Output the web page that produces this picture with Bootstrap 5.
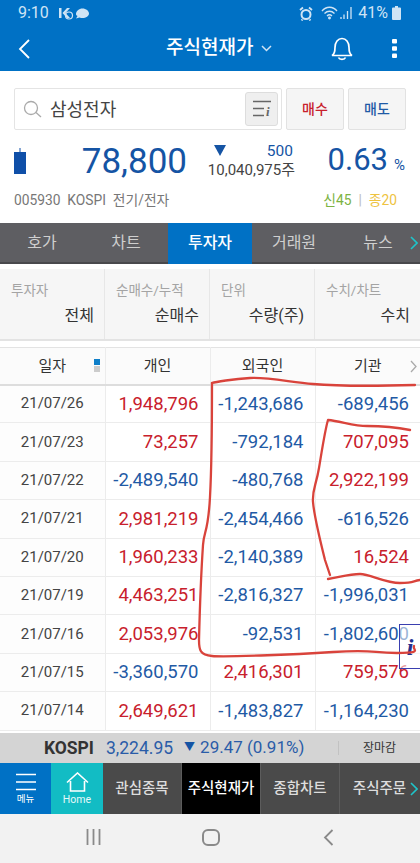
<!DOCTYPE html>
<html lang="ko">
<head>
<meta charset="UTF-8" />
<meta name="viewport" content="width=device-width, initial-scale=1.0"/>
<title>주식현재가</title>
<link href="https://cdn.jsdelivr.net/npm/bootstrap@5.3.2/dist/css/bootstrap.min.css" rel="stylesheet"/>
<style>
html, body { height: 863px; overflow: hidden; }
body { width: 420px; position: relative; background: #fff; color: #333; font-family: Roboto, "Noto Sans CJK KR", sans-serif; }
.app-top { background: #0071c5; height: 71px; color: #fff; padding: 0 23px 0 18px; }
.status-row { height: 26px; font-size: 16px; color: #cfe4f5; margin-right: -4px; }
.title-row { height: 45px; }
.title-text { font-size: 19px; font-weight: 500; margin-left: 135px; }
.search-row { height: 69px; padding: 17px 14px 0 14px; gap: 4px; }
.search-box { width: 268px; height: 42px; border: 1px solid #e4e4e4; border-radius: 2px; padding: 0 3px 0 8px; }
.search-name { font-size: 18px; margin-left: 8px; color: #444; }
.info-btn { width: 33px; height: 34px; background: #efefef; border: 1px solid #ddd; border-radius: 3px; }
.side-btn { width: 58px; height: 42px; background: #f5f5f5; border: 1px solid #e2e2e2; border-radius: 2px; font-size: 14px; font-weight: 500; }
.is-up { color: #c8202c; }
.is-down { color: #1f5aa5; }
.price-row { height: 44px; padding: 0 15px 0 14px; }
.big-price { width: 161px; text-align: right; font-size: 35px; color: #1554a4; line-height: 44px; }
.change-box { width: 88px; margin-left: 20px; margin-top: -2px; text-align: right; line-height: 19px; font-size: 15.500px; }
.change-top { color: #1554a4; padding-right: 2px; }
.change-vol { color: #444; font-size: 15px; white-space: nowrap; }
.pct-box { margin-left: auto; color: #1554a4; font-size: 31px; line-height: 44px; white-space: nowrap; }
.pct-box span { font-size: 15px; margin-left: 6px; }
.code-row { height: 39px; padding: 6px 23px 0 14px; font-size: 13.800px; color: #777; }
.tag-new { color: #7cb342; }
.tag-sep { color: #bbb; margin: 0 7px; }
.tag-mid { color: #eec33f; }
.tab-strip { height: 41px; background: #5e5e62; border-bottom: 2px solid #49494c; position: relative; }
.tab-item { width: 84px; text-align: center; line-height: 40px; color: #cfcfcf; font-size: 16px; }
.tab-item.is-on { background: #0071c5; color: #fff; font-weight: 500; height: 41px; }
.tab-more { position: absolute; right: 2px; top: 13px; }
.filter-strip { margin-top: 5px; height: 72px; background: #f6f6f6; border-bottom: 2px solid #e3e3e3; }
.filter-cell { width: 105px; border-right: 1px solid #e7e7e7; padding: 11px 10px 0 11px; }
.filter-cell:last-child { border-right: 0; }
.filter-label { font-size: 13.500px; color: #a4a4a4; line-height: 20px; }
.filter-value { font-size: 16px; color: #333; text-align: right; line-height: 24px; margin-top: 4px; }
.data-wrap { margin-top: 6px; }
.quote-table { table-layout: fixed; width: 420px; border-collapse: collapse; margin: 0; }
.quote-table th, .quote-table td { border-right: 1px solid #ececec; border-bottom: 1px solid #ececec; padding: 0 11px 0 0; text-align: right; vertical-align: middle; box-shadow: none; background: none; }
.quote-table th:last-child, .quote-table td:last-child { border-right: 0; }
.quote-table thead th { height: 37px; background: #fbfbfb; border-top: 1px solid #e3e3e3; border-bottom: 2px solid #ddd; font-size: 15px; font-weight: 400; color: #333; text-align: center; padding: 0; position: relative; }
.quote-table td { height: 38.400px; font-size: 18.500px; line-height: 1; }
.quote-table td:first-child { text-align: center; font-size: 15px; color: #444; padding: 0; background: #fdfdfd; }
.sort-mark { position: absolute; right: 5px; top: 11px; width: 6px; }
.sort-mark i { display: block; height: 6px; background: #0f7fc9; margin-bottom: 1px; }
.sort-mark i + i { background: #ccc; }
.head-more { position: absolute; right: 3px; top: 12px; }
.market-bar { position: absolute; left: 0; top: 733px; width: 420px; height: 30px; background: #d4d4d4; font-size: 17px; }
.market-name { width: 94px; text-align: right; font-weight: 700; color: #333; font-size: 17.500px; }
.market-num { color: #2a5ca8; margin-left: 12px; white-space: nowrap; font-size: 17.500px; }
.market-change { color: #2a5ca8; margin-left: 11px; white-space: nowrap; }
.market-tri { font-size: 11px; margin-right: 5px; vertical-align: 2px; color: #1554a4; }
.market-state { margin-left: auto; width: 82px; font-size: 12px; color: #333; text-align: center; border-left: 1px solid #c2c2c2; line-height: 14px; }
.app-nav { position: absolute; left: 0; top: 763px; width: 420px; height: 51px; background: #4a4a4a; color: #ddd; }
.nav-menu { width: 51px; background: #0071c5; color: #fff; }
.nav-home { width: 52px; background: #12bcc4; color: #fff; }
.nav-mini { font-size: 9.500px; line-height: 11px; margin-top: 2px; }
.nav-home .nav-mini { font-size: 10.500px; color: #e6f8f9; }
.nav-item { width: 79px; text-align: center; font-size: 14.500px; font-weight: 500; line-height: 51px; border-right: 1px solid #5c5c5c; white-space: nowrap; }
.nav-item.is-on { background: #000; color: #fff; }
.nav-arrow { position: absolute; right: 2px; top: 19px; }
.sys-nav { position: absolute; left: 0; top: 814px; width: 420px; height: 49px; background: #f2f2f2; }
.ink-layer { position: absolute; left: 0; top: 0; pointer-events: none; }
.float-tab { position: absolute; left: 399px; top: 624px; width: 21px; height: 45px; border: 1px solid #3a3fb0; border-right: 0; background: rgba(255,255,255,.55); color: #23308f; font-family: "Liberation Serif", serif; font-weight: 700; font-style: italic; font-size: 24px; text-align: center; line-height: 44px; }
</style>
</head>
<body>

<div class="app-top">
  <div class="status-row d-flex align-items-center">
    <span>9:10</span>
    <svg style="margin-left:9px" width="32" height="14" viewBox="0 0 32 14"><path d="M1 2h2.500v10H1zM4.500 7 9 2h3L7.500 7 12 12H9z" fill="#cfe4f5"/><circle cx="11" cy="9.500" r="3.500" fill="none" stroke="#cfe4f5" stroke-width="1.200"/><path d="M18 8c0-3 3-5.500 6.500-5.500S31 5 31 7.500 28 12 24.500 12c-1 0-2 0-3-.5L18 12.500l1.500-2.500c-1-.5-1.500-1-1.500-2z" fill="#cfe4f5"/></svg>
    <span class="ms-auto d-flex align-items-center">
      <svg width="14" height="15" viewBox="0 0 14 15" fill="none" stroke="#cfe4f5"><circle cx="7" cy="8.500" r="4.500" stroke-width="2"/><path d="M1 4 4 1.500M13 4l-3-2.500M3.500 13.500l-1 1M10.500 13.500l1 1" stroke-width="1.800"/></svg>
      <svg class="ms-2" width="32" height="14" viewBox="0 0 32 14" fill="none" stroke="#cfe4f5" stroke-width="1.300"><path d="M1 5c4-5 11-5 15 0M3.500 7.500c3-3 7-3 10 0M6 10c1.500-1.500 3.500-1.500 5 0"/><circle cx="8.500" cy="12" r=".8" fill="#cfe4f5"/><path d="M20 13v-2M23 13V8.500M26.500 13V5M30 13V1"/></svg>
      <span style="margin-left:5px">41%</span>
      <svg style="margin-left:4px" width="9" height="14" viewBox="0 0 9 14" fill="#cfe4f5"><path d="M3 0h3v1.500h2a1 1 0 0 1 1 1V13a1 1 0 0 1-1 1H1a1 1 0 0 1-1-1V2.500a1 1 0 0 1 1-1h2z"/></svg>
    </span>
  </div>
  <div class="title-row d-flex align-items-center">
    <svg width="13" height="20" viewBox="0 0 13 20" fill="none" stroke="#fff" stroke-width="1.800"><path d="M11 1 2 10l9 9"/></svg>
    <div class="d-flex align-items-center title-text">주식현재가
      <svg class="ms-2" width="11" height="7" viewBox="0 0 11 7" fill="none" stroke="#cfe4f5" stroke-width="1.500"><path d="m1 1 4.500 4.500L10 1"/></svg>
    </div>
    <svg class="ms-auto" width="22" height="24" viewBox="0 0 22 24" fill="none" stroke="#fff" stroke-width="1.700"><path d="M1 18.500c2-1 3-3 3-8C4 5 7 1.500 11 1.500s7 3.500 7 9c0 5 1 7 3 8z"/><path d="M7.500 20.500c1 2.500 6 2.500 7 0"/></svg>
    <svg style="margin-left:39px" width="5" height="19" viewBox="0 0 5 19" fill="#fff"><rect width="5" height="4.500" rx="1"/><rect y="7.200" width="5" height="4.500" rx="1"/><rect y="14.500" width="5" height="4.500" rx="1"/></svg>
  </div>
</div>

<div class="search-row d-flex">
  <div class="search-box d-flex align-items-center">
    <svg width="19" height="18" viewBox="0 0 19 18" fill="none" stroke="#aaa" stroke-width="1.300"><circle cx="8" cy="8" r="6.500"/><path d="m13 12.500 5 4.500"/></svg>
    <span class="search-name">삼성전자</span>
    <span class="info-btn ms-auto d-flex align-items-center justify-content-center">
      <svg width="20" height="18" viewBox="0 0 20 18"><path d="M1 1.500h18M1 8.500h11M1 15.500h11" stroke="#666" stroke-width="1.300"/><text x="14" y="16" font-family="Liberation Serif, serif" font-style="italic" font-weight="700" font-size="13" fill="#666">i</text></svg>
    </span>
  </div>
  <button class="side-btn is-up p-0">매수</button>
  <button class="side-btn is-down p-0">매도</button>
</div>

<div class="price-row d-flex align-items-center">
  <svg width="12" height="28" viewBox="0 0 12 28"><path d="M6 0v4" stroke="#0f4fa8"/><rect y="4" width="12" height="22" fill="#0f4fa8"/></svg>
  <div class="big-price">78,800</div>
  <div class="change-box position-relative">
    <svg class="position-absolute" style="left:7px;top:3px" width="12" height="11" viewBox="0 0 12 11" fill="#1554a4"><path d="M0 0h12L6 11z"/></svg>
    <div class="change-top">500</div>
    <div class="change-vol">10,040,975주</div>
  </div>
  <div class="pct-box">0.63<span>%</span></div>
</div>

<div class="code-row d-flex justify-content-between">
  <span>005930&nbsp; KOSPI&nbsp; 전기/전자</span>
  <span><span class="tag-new">신45</span><span class="tag-sep">|</span><span class="tag-mid">종20</span></span>
</div>

<div class="tab-strip d-flex">
  <div class="tab-item">호가</div>
  <div class="tab-item">차트</div>
  <div class="tab-item is-on">투자자</div>
  <div class="tab-item">거래원</div>
  <div class="tab-item">뉴스</div>
  <svg class="tab-more" width="8" height="14" viewBox="0 0 8 14" fill="none" stroke="#1fc4c9" stroke-width="1.600"><path d="m1 1 6 6-6 6"/></svg>
</div>

<div class="filter-strip d-flex">
  <div class="filter-cell"><div class="filter-label">투자자</div><div class="filter-value">전체</div></div>
  <div class="filter-cell"><div class="filter-label">순매수/누적</div><div class="filter-value">순매수</div></div>
  <div class="filter-cell"><div class="filter-label">단위</div><div class="filter-value">수량(주)</div></div>
  <div class="filter-cell"><div class="filter-label">수치/차트</div><div class="filter-value">수치</div></div>
</div>

<div class="data-wrap">
  <table class="table quote-table">
    <thead>
      <tr>
        <th>일자<span class="sort-mark"><i></i><i></i></span></th>
        <th>개인</th>
        <th>외국인</th>
        <th>기관<svg class="head-more" width="7" height="13" viewBox="0 0 7 13" fill="none" stroke="#aaa" stroke-width="1.300"><path d="m1 1 5 5.500L1 12"/></svg></th>
      </tr>
    </thead>
    <tbody>
      <tr><td>21/07/26</td><td class="is-up">1,948,796</td><td class="is-down">-1,243,686</td><td class="is-down">-689,456</td></tr>
      <tr><td>21/07/23</td><td class="is-up">73,257</td><td class="is-down">-792,184</td><td class="is-up">707,095</td></tr>
      <tr><td>21/07/22</td><td class="is-down">-2,489,540</td><td class="is-down">-480,768</td><td class="is-up">2,922,199</td></tr>
      <tr><td>21/07/21</td><td class="is-up">2,981,219</td><td class="is-down">-2,454,466</td><td class="is-down">-616,526</td></tr>
      <tr><td>21/07/20</td><td class="is-up">1,960,233</td><td class="is-down">-2,140,389</td><td class="is-up">16,524</td></tr>
      <tr><td>21/07/19</td><td class="is-up">4,463,251</td><td class="is-down">-2,816,327</td><td class="is-down">-1,996,031</td></tr>
      <tr><td>21/07/16</td><td class="is-up">2,053,976</td><td class="is-down">-92,531</td><td class="is-down">-1,802,600</td></tr>
      <tr><td>21/07/15</td><td class="is-down">-3,360,570</td><td class="is-up">2,416,301</td><td class="is-up">759,576</td></tr>
      <tr><td>21/07/14</td><td class="is-up">2,649,621</td><td class="is-down">-1,483,827</td><td class="is-down">-1,164,230</td></tr>
    </tbody>
  </table>
</div>

<div class="market-bar d-flex align-items-center">
  <span class="market-name">KOSPI</span>
  <span class="market-num">3,224.95</span>
  <span class="market-change"><span class="market-tri">▼</span>29.47 (0.91%)</span>
  <span class="market-state">장마감</span>
</div>

<div class="app-nav d-flex">
  <div class="nav-menu d-flex flex-column align-items-center justify-content-center">
    <svg width="20" height="18" viewBox="0 0 20 18" fill="none" stroke="#fff" stroke-width="1.600"><path d="M0 1.500h20M0 9h20M0 16.500h20"/></svg>
    <div class="nav-mini">메뉴</div>
  </div>
  <div class="nav-home d-flex flex-column align-items-center justify-content-center">
    <svg width="23" height="20" viewBox="0 0 23 20" fill="none" stroke="#fff" stroke-width="1.600"><path d="M1 10.500 11.500 1 22 10.500M4.500 9v10h14V9"/></svg>
    <div class="nav-mini">Home</div>
  </div>
  <div class="nav-item">관심종목</div>
  <div class="nav-item is-on">주식현재가</div>
  <div class="nav-item">종합차트</div>
  <div class="nav-item border-0">주식주문</div>
  <svg class="nav-arrow" width="8" height="14" viewBox="0 0 8 14" fill="none" stroke="#1fc4c9" stroke-width="1.600"><path d="m1 1 6 6-6 6"/></svg>
</div>

<div class="sys-nav d-flex align-items-center">
  <svg class="position-absolute" style="left:86px;top:15px" width="15" height="16" viewBox="0 0 15 16" fill="none" stroke="#8a8a8a" stroke-width="1.800"><path d="M1.500 0v16M7.500 0v16M13.500 0v16"/></svg>
  <svg class="position-absolute" style="left:202px;top:15px" width="18" height="17" viewBox="0 0 18 17" fill="none" stroke="#8a8a8a" stroke-width="2"><rect x="1" y="1" width="16" height="15" rx="5"/></svg>
  <svg class="position-absolute" style="left:323px;top:15px" width="11" height="17" viewBox="0 0 11 17" fill="none" stroke="#8a8a8a" stroke-width="1.800"><path d="M9.500 1 2 8.500 9.500 16"/></svg>
</div>

<div class="float-tab">i</div>

<!-- red pen marks drawn over the table -->
<svg class="ink-layer" width="420" height="863" viewBox="0 0 420 863" fill="none" stroke="#d9433b" stroke-width="2.300" stroke-linecap="round" stroke-linejoin="round">
  <path d="M212 383C215 382 233 379 250 378S290 382 313 384 380 386 415 385"/>
  <path d="M212 383C212 420 212 460 210 497S204 530 203 545 200 600 199 640C199 650 200 655 212 656S290 655 333 652 370 653 397 653 412 650 414 646"/>
  <path d="M410 430C395 427 380 426 367 426S340 421 328 420C325 430 322 450 319 468S312 490 313 502 320 540 325 560L330 575"/>
  <path d="M328 579C340 577 350 574 360 574S385 583 400 583 412 581 420 580"/>
</svg>

<script src="https://cdn.jsdelivr.net/npm/bootstrap@5.3.2/dist/js/bootstrap.bundle.min.js"></script>
</body>
</html>
